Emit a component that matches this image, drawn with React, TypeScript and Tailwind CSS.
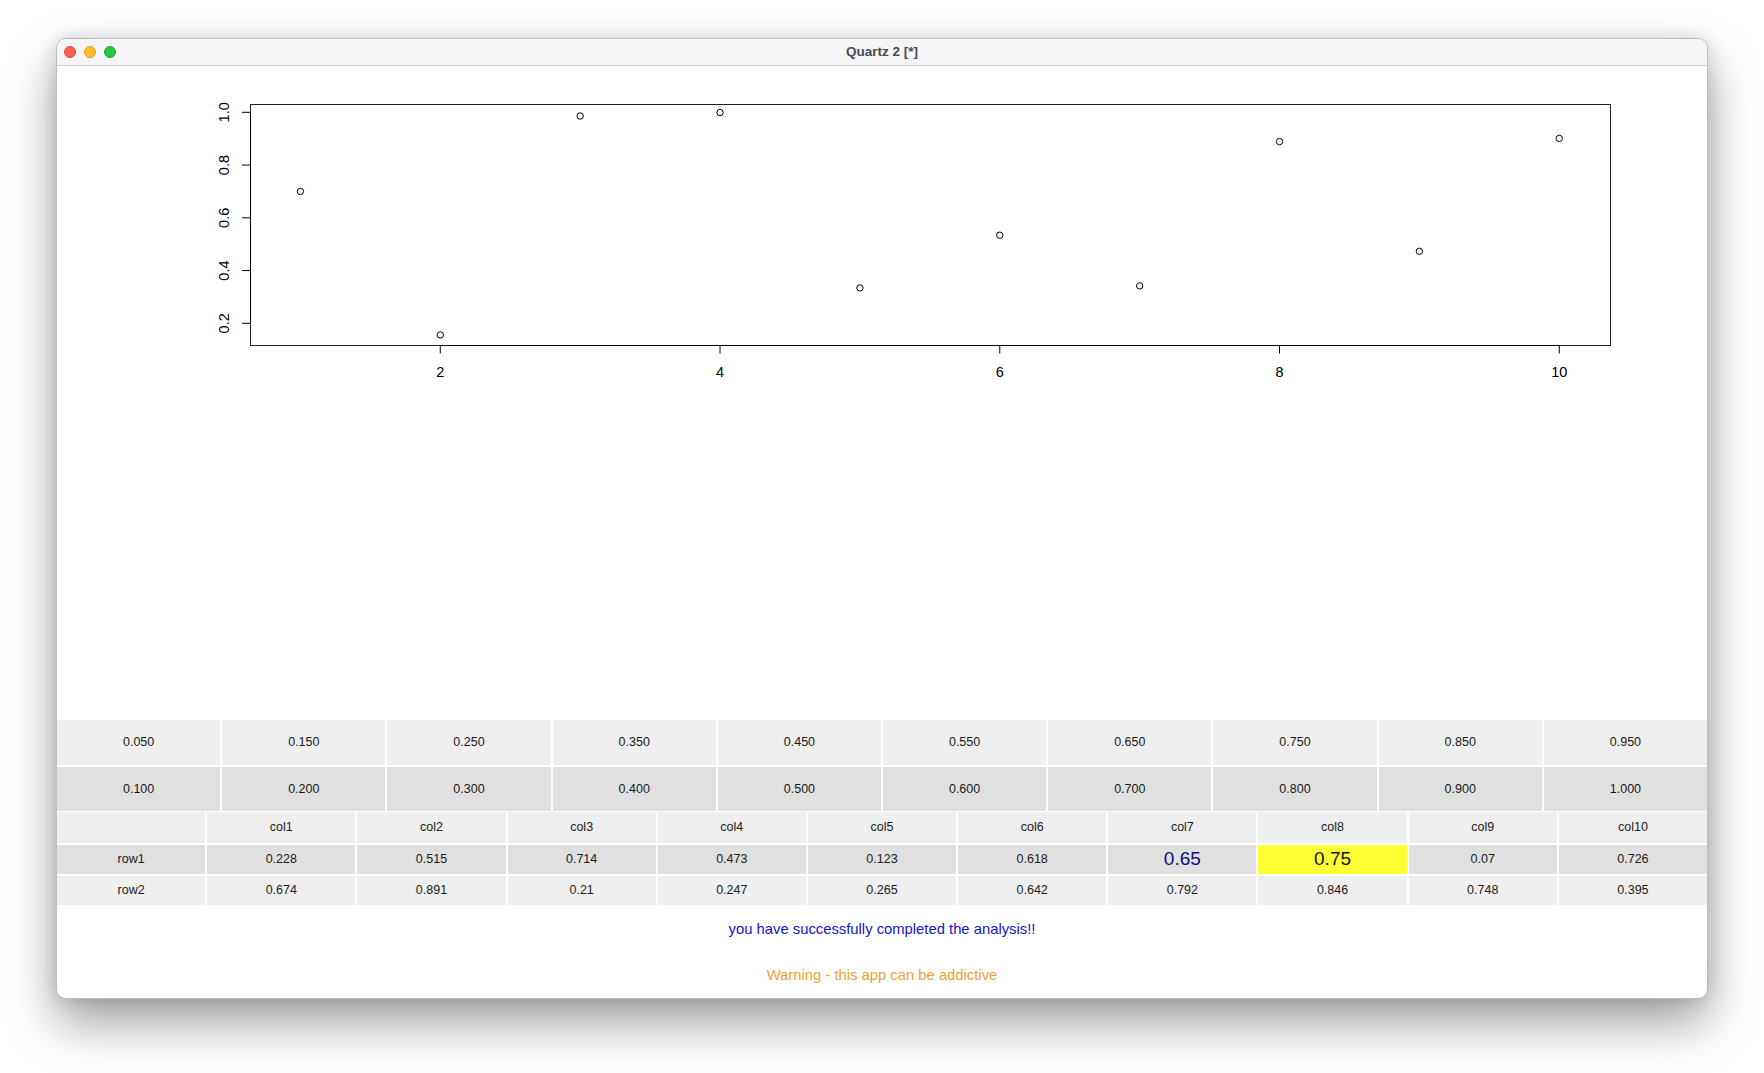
import React from "react";

const FONT = { fontFamily: '"Liberation Sans", Arial, Helvetica, sans-serif' };

const pts = [0.7, 0.156, 0.986, 0.999, 0.334, 0.534, 0.342, 0.889, 0.473, 0.901];
const xOf = (i: number) => 243.4 + (i - 1) * 139.875;
const yOf = (v: number) => 257.3 - (v - 0.2) * 263.75;

function Plot() {
  const yTicks = [0.2, 0.4, 0.6, 0.8, 1.0];
  const xTicks = [2, 4, 6, 8, 10];
  return (
    <svg width={1652} height={654} viewBox="0 0 1652 654" className="block">
      <rect x={193.5} y={38.5} width={1360} height={241} fill="none" stroke="#222" strokeWidth={1} />
      <line x1={193.5} y1={yOf(0.2)} x2={193.5} y2={yOf(1.0)} stroke="#000" strokeWidth={1} />
      <line x1={xOf(2)} y1={279.5} x2={xOf(10)} y2={279.5} stroke="#000" strokeWidth={1} />
      {yTicks.map((v) => (
        <g key={v}>
          <line x1={185} y1={yOf(v)} x2={193.5} y2={yOf(v)} stroke="#000" strokeWidth={1} />
          <text
            transform={`translate(172.3, ${yOf(v)}) rotate(-90)`}
            textAnchor="middle"
            fontSize={14.5}
            fill="#000"
            style={FONT}
          >
            {v.toFixed(1)}
          </text>
        </g>
      ))}
      {xTicks.map((t) => (
        <g key={t}>
          <line x1={xOf(t)} y1={279.5} x2={xOf(t)} y2={287.5} stroke="#000" strokeWidth={1} />
          <text x={xOf(t)} y={310.7} textAnchor="middle" fontSize={14.5} fill="#000" style={FONT}>
            {t}
          </text>
        </g>
      ))}
      {pts.map((v, i) => (
        <circle key={i} cx={xOf(i + 1)} cy={yOf(v)} r={3.2} fill="none" stroke="#000" strokeWidth={1} />
      ))}
    </svg>
  );
}

const t1r1 = ["0.050", "0.150", "0.250", "0.350", "0.450", "0.550", "0.650", "0.750", "0.850", "0.950"];
const t1r2 = ["0.100", "0.200", "0.300", "0.400", "0.500", "0.600", "0.700", "0.800", "0.900", "1.000"];

const r1 = ["0.228", "0.515", "0.714", "0.473", "0.123", "0.618", "0.65", "0.75", "0.07", "0.726"];
const r2 = ["0.674", "0.891", "0.21", "0.247", "0.265", "0.642", "0.792", "0.846", "0.748", "0.395"];

export default function App() {
  return (
    <div className="w-[1764px] h-[1073px] bg-white overflow-hidden" style={FONT}>
      <div className="ml-[56px] mt-[38px] w-[1652px] h-[961px] rounded-[10px] overflow-hidden bg-white border border-[#bdbdbd] shadow-[0_24px_50px_rgba(0,0,0,0.38),0_0_18px_rgba(0,0,0,0.12)] flex flex-col">
        {/* Title bar */}
        <div className="relative h-[27px] shrink-0 bg-[#f5f5f7] border-b border-[#d4d4d6] flex items-center">
          <div className="flex items-center gap-[8px] pl-[7px]">
            <span className="w-[12px] h-[12px] rounded-full bg-[#ff5f57] border border-[#e2463f]" />
            <span className="w-[12px] h-[12px] rounded-full bg-[#febc2e] border border-[#e1a116]" />
            <span className="w-[12px] h-[12px] rounded-full bg-[#28c840] border border-[#14ae2c]" />
          </div>
          <div className="absolute inset-0 flex items-center justify-center pointer-events-none">
            <span className="text-[13.5px] font-bold text-[#4b4b4d]">Quartz 2 [*]</span>
          </div>
        </div>

        {/* Plot */}
        <div className="h-[654px] shrink-0">
          <Plot />
        </div>

        {/* Table 1 */}
        <div className="grid grid-cols-10 gap-[2px] bg-white text-[12.5px] text-[#1a1a1a]">
          {t1r1.map((v) => (
            <div key={v} className="h-[45px] bg-[#efefef] flex items-center justify-center">
              {v}
            </div>
          ))}
          {t1r2.map((v) => (
            <div key={v} className="h-[44px] bg-[#e0e0e0] flex items-center justify-center">
              {v}
            </div>
          ))}
        </div>

        {/* Table 2 */}
        <div className="mt-[1px] grid grid-cols-11 gap-[2px] bg-white text-[12.5px] text-[#1a1a1a]">
          <div className="h-[31px] bg-[#efefef]" />
          {Array.from({ length: 10 }, (_, i) => (
            <div key={i} className="h-[31px] bg-[#efefef] flex items-center justify-center">
              {`col${i + 1}`}
            </div>
          ))}
          <div className="h-[29px] bg-[#e0e0e0] flex items-center justify-center">row1</div>
          {r1.map((v, i) => {
            if (i === 6)
              return (
                <div key={i} className="h-[29px] bg-[#e0e0e0] flex items-center justify-center text-[19px] text-[#0c0c82]">
                  {v}
                </div>
              );
            if (i === 7)
              return (
                <div key={i} className="h-[29px] bg-[#ffff36] flex items-center justify-center text-[19px] text-[#111]">
                  {v}
                </div>
              );
            return (
              <div key={i} className="h-[29px] bg-[#e0e0e0] flex items-center justify-center">
                {v}
              </div>
            );
          })}
          <div className="h-[29px] bg-[#efefef] flex items-center justify-center">row2</div>
          {r2.map((v, i) => (
            <div key={i} className="h-[29px] bg-[#efefef] flex items-center justify-center">
              {v}
            </div>
          ))}
        </div>

        {/* Messages */}
        <div className="flex flex-col items-center text-[14.8px] leading-[17px]">
          <div className="mt-[16px] text-[#1414c8]">you have successfully completed the analysis!!</div>
          <div className="mt-[29px] text-[#f0a030]">Warning - this app can be addictive</div>
        </div>
      </div>
    </div>
  );
}
